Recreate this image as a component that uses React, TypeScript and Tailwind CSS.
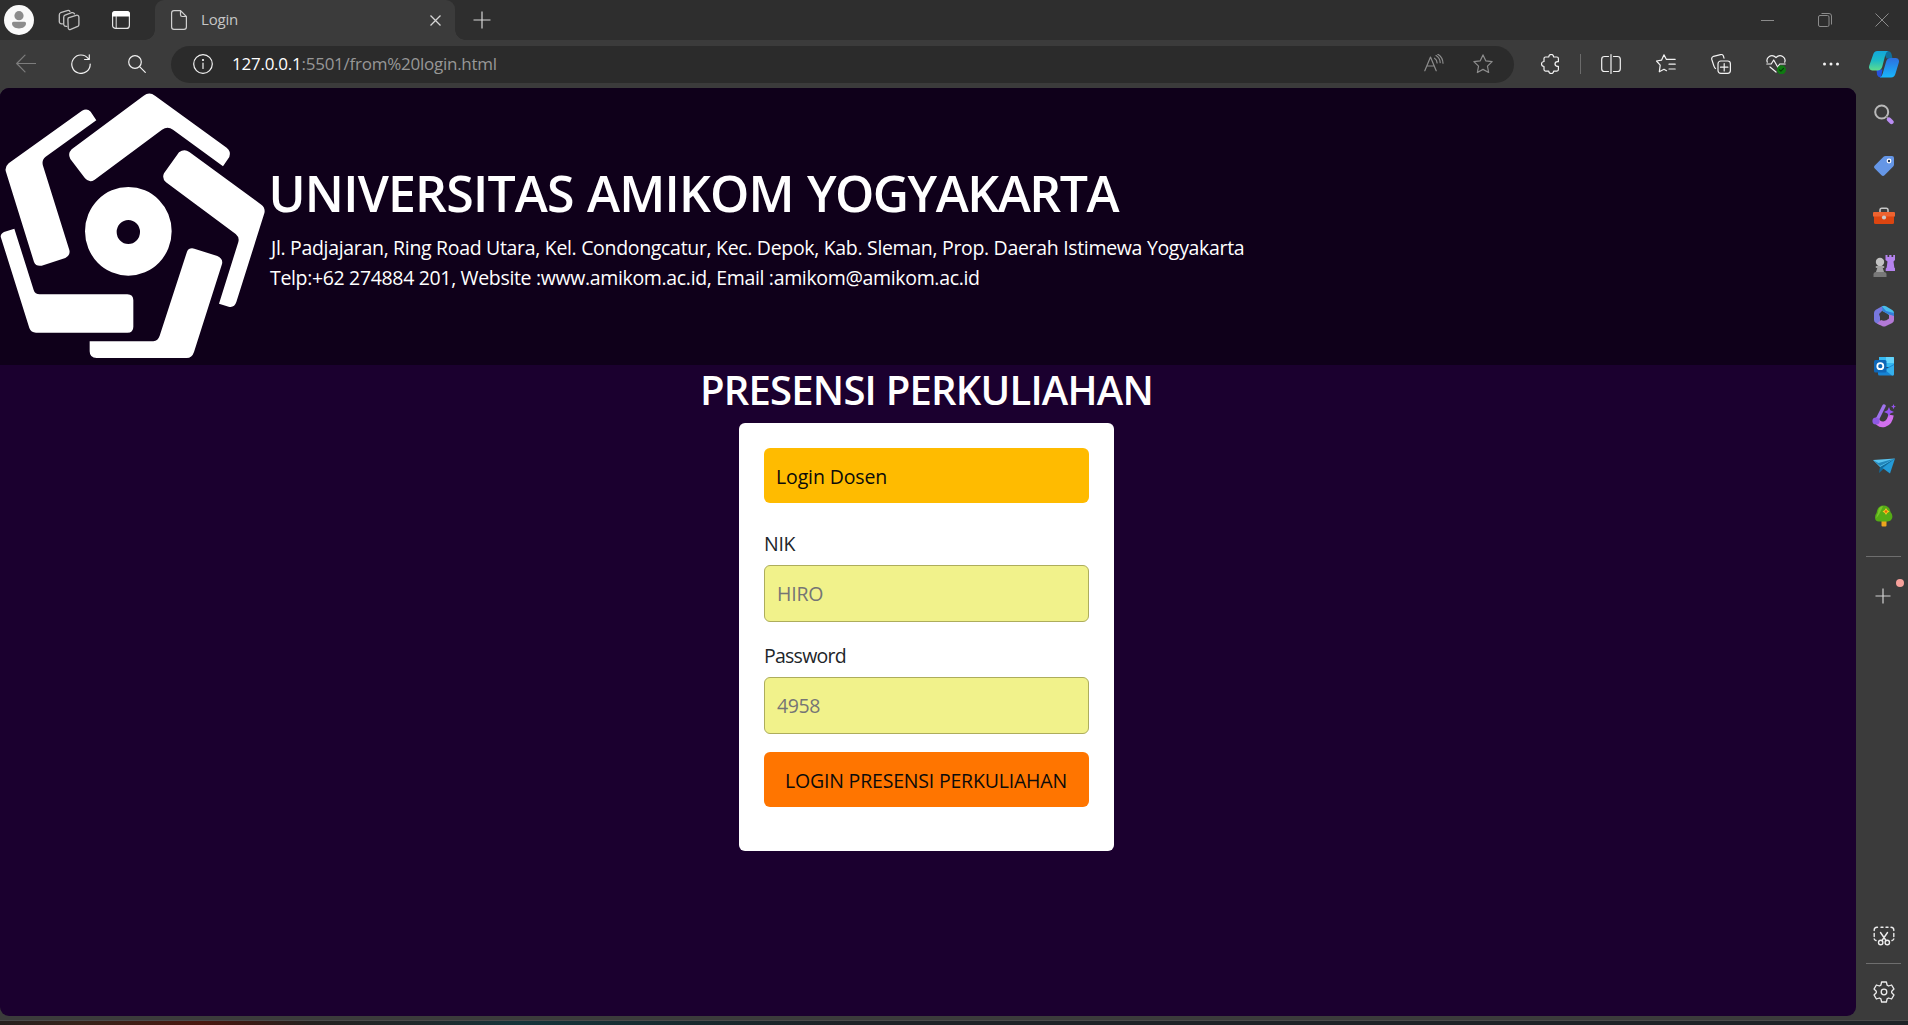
import type { ReactNode } from 'react';

function Icon({ size = 20, children, className = 'text-[#f2f2f2]' }: { size?: number; children: ReactNode; className?: string }) {
  return (
    <svg width={size} height={size} viewBox="0 0 20 20" fill="none" stroke="currentColor" strokeWidth="1.2" strokeLinecap="round" strokeLinejoin="round" className={className}>
      {children}
    </svg>
  );
}

const star = 'M10 0.9l2.75 5.9 6.4.85-4.7 4.45 1.2 6.4L10 15.4l-5.65 3.1 1.2-6.4L.85 7.65l6.4-.85z';

function TabStrip() {
  return (
    <div className="flex h-10 shrink-0 bg-[#2e2e2e]">
      <div className="flex w-[155px] items-center pl-1">
        <svg width="30" height="30" viewBox="0 0 30 30">
          <circle cx="15" cy="15" r="15" fill="#fafafa" />
          <circle cx="15" cy="10.7" r="4.6" fill="#8c8c8c" />
          <path d="M9.5 16.7h11q1.5 0 1.5 1.6c0 3.3-3 5.2-7 5.2s-7-1.9-7-5.2q0-1.6 1.5-1.6z" fill="#8c8c8c" />
        </svg>
        <Icon size={22} className="ml-6 text-[#c4c4c4]">
          <path d="M9 9.5 9.3 8l7.2-2.3q2.2-.5 2.5 1.7v6.8q0 1.1-1 1.6l-6.5 2.8q-1.7.6-2.2-1.2z" />
          <path d="M8 15.8q-2.3.4-2.8-1.6V7.6q0-1.5 1.2-2l6.1-2.2q1.7-.5 2.5 1" />
          <path d="M4 13.5q-2.2.4-2.8-1.6V5.4q0-1.5 1.2-2l6-2q1.6-.5 2.4.8" />
        </Icon>
        <svg width="18" height="18" viewBox="0 0 18 18" className="ml-8">
          <rect x=".6" y=".6" width="16.8" height="16.8" rx="3" fill="none" stroke="#e4e4e4" strokeWidth="1.2" />
          <path d="M0 5.5V3q0-3 3-3h12q3 0 3 3v2.500z" fill="#fff" />
          <path d="M4.200 5v12" stroke="#e4e4e4" />
        </svg>
      </div>
      <div className="relative flex w-[300px] items-center rounded-t-[9px] bg-[#3b3b3b] pl-4">
        <span className="absolute bottom-0 -left-2.5 h-2.5 w-2.5 bg-[radial-gradient(circle_at_0_0,#2e2e2e_9.5px,#3b3b3b_10px)]" />
        <span className="absolute -right-2.5 bottom-0 h-2.5 w-2.5 bg-[radial-gradient(circle_at_100%_0,#2e2e2e_9.5px,#3b3b3b_10px)]" />
        <svg width="16" height="20" viewBox="0 0 16 20" fill="none" stroke="#d0d0d0" strokeWidth="1.2">
          <path d="M9.500.6H3Q.6.6.6 3v14q0 2.400 2.400 2.400h10q2.400 0 2.400-2.400V6.500zM9.500.6v4.200q0 1.700 1.700 1.700h4.200" />
        </svg>
        <span className="mt-[-2px] ml-[14px] text-[15px] leading-5 tracking-[-0.2px] text-[#c6c6c6]">Login</span>
        <svg width="11" height="11" viewBox="0 0 11 11" stroke="#d6d6d6" strokeWidth="1.3" className="mr-[14px] ml-auto">
          <path d="M.5.5l10 10M10.500.5l-10 10" />
        </svg>
      </div>
      <svg width="18" height="18" viewBox="0 0 18 18" stroke="#d6d6d6" strokeWidth="1.2" className="mt-[11px] ml-[18px]">
        <path d="M9 .5v17M.5 9h17" />
      </svg>
      <div className="mr-[19px] ml-auto flex items-center gap-[43.5px] text-[#8b8b8b]">
        <svg width="13" height="13" viewBox="0 0 13 13" stroke="currentColor"><path d="M0 6.500h13" /></svg>
        <svg width="14" height="14" viewBox="0 0 14 14" fill="none" stroke="currentColor"><path d="M.5 4q0-1.500 1.500-1.500h7.500q1.500 0 1.500 1.500v8q0 1.500-1.500 1.500H2Q.5 13.500.5 12zM3.500.5H11q2.500 0 2.500 2.500v8.500" /></svg>
        <svg width="14" height="14" viewBox="0 0 14 14" stroke="currentColor"><path d="M.5.5l13 13M13.500.5l-13 13" /></svg>
      </div>
    </div>
  );
}

function Cell({ children }: { children: ReactNode }) {
  return <div className="flex w-[55px] shrink-0 justify-center">{children}</div>;
}

function Toolbar() {
  return (
    <div className="flex h-12 shrink-0 items-center bg-[#3b3b3b]">
      <div className="flex w-[171px] shrink-0 pr-[7px]">
        <div className="flex w-[52px] justify-center">
          <Icon className="text-[#7d7d7d]"><path d="M19.500 9.500H.8M9 1.200.7 9.500 9 17.800" /></Icon>
        </div>
        <div className="flex w-[57px] justify-center">
          <Icon><path d="M17.300 4.600A9.200 9.200 0 1 0 19.200 10M18.300.8v4.700h-4.700" /></Icon>
        </div>
        <div className="flex flex-1 justify-center">
          <Icon><circle cx="8" cy="8" r="6.300" /><path d="M12.600 12.600l5.700 5.700" /></Icon>
        </div>
      </div>
      <div className="flex h-[37px] w-[1343px] shrink-0 items-center rounded-full bg-[#2b2b2b] pl-[22px]">
        <Icon><circle cx="10" cy="10" r="9.300" /><path d="M10 9v5.500" /><circle cx="10" cy="6" r=".5" fill="currentColor" /></Icon>
        <span className="ml-[19px] text-[17px] leading-6 tracking-[-0.25px] whitespace-nowrap text-white">127.0.0.1</span>
        <span className="text-[17px] leading-6 tracking-[-0.25px] whitespace-nowrap text-[#979797]">:5501/from%20login.html</span>
        <div className="mr-[21px] ml-auto flex items-center gap-[29px] text-[#8d8d8d]">
          <Icon className=""><path d="M.8 16.800 6.500 3l5.700 13.800M2.700 12h7.600M10.500 4.200q2.500 1.600 2.600 4.800M12 1.600q4 2.400 4.200 7M13.800.2q5 3 5.200 9" /></Icon>
          <Icon className=""><path d={star} /></Icon>
        </div>
      </div>
      <div className="ml-[9px] flex shrink-0 items-center">
        <Cell>
          <Icon>
            <path d="M4.500 3h3.200q.3-2.600 2.500-2.600T12.700 3h3.200q1.500 0 1.500 1.500v3.200h-.7q-2.700.2-2.700 2.400t2.700 2.300h.7v3.200q0 1.500-1.500 1.500h-3.200q-.3 2.500-2.500 2.500t-2.500-2.500H4.500Q3 17.100 3 15.600v-3.100Q.5 12.200.5 10T3 7.500v-3Q3 3 4.500 3z" />
          </Icon>
        </Cell>
        <div className="flex w-[5px] justify-center"><div className="h-5 w-[1.5px] bg-[#6b6b6b]" /></div>
        <Cell>
          <Icon><path d="M7.500 2.500H3.500Q.7 2.500.7 5.300v9.400q0 2.800 2.800 2.800h4M12.500 2.500h4q2.800 0 2.800 2.800v9.400q0 2.800-2.800 2.800h-4M10 .6v18.800" /></Icon>
        </Cell>
        <Cell>
          <Icon><path d="M10.300 5.300 8 .8 5.500 6.200l-5 .8 3.700 4.200-.9 6.600L8 15.300l2.500 1.400M10.300 5.300h8.900M13 10.200h6.200M13 15h6.200" /></Icon>
        </Cell>
        <Cell>
          <Icon><rect x="7" y="7" width="12.400" height="12.400" rx="2.800" /><path d="M13.200 9.500v7.400M9.500 13.200h7.400M4.500 14.500Q3.500 14 3 12.200L.8 5.500Q.2 3.200 2.500 2.300L9.500.6q2.300-.5 3 1.700l.5 1.900" /></Icon>
        </Cell>
        <Cell>
          <Icon>
            <path d="M1.300 8.200C-.5 3.500 5.500-1 10 3.500c4.500-4.500 10.500 0 8.700 4.700M.8 10h4.400l2.500-4 4 7 2-3h5.500M4 13l6 5" />
            <circle cx="15.500" cy="15.700" r="4.500" fill="#0f7a12" stroke="none" />
            <path d="M13.500 15.800l1.400 1.400 2.600-2.800" stroke="#053f08" />
          </Icon>
        </Cell>
        <Cell>
          <Icon><g fill="currentColor" stroke="none"><circle cx="3.500" cy="10" r="1.500" /><circle cx="10" cy="10" r="1.500" /><circle cx="16.500" cy="10" r="1.500" /></g></Icon>
        </Cell>
        <div className="flex w-[50px] justify-center pl-px">
          <svg width="30" height="27" viewBox="0 0 30 27">
            <defs>
              <linearGradient id="cpA" x1="0" y1="0" x2="0" y2="1"><stop stopColor="#12a7dc" /><stop offset=".5" stopColor="#1ebbc4" /><stop offset="1" stopColor="#5fdc8c" /></linearGradient>
              <linearGradient id="cpB" x1="0" y1="0" x2="0" y2="1"><stop stopColor="#2d6fe0" /><stop offset="1" stopColor="#18b6fb" /></linearGradient>
            </defs>
            <path d="M14 0h4.500q3 0 4 3l1 4.500h-6z" fill="#106f9c" />
            <path d="M7.500 18.500h6l-1.500 8q-3 0-4-3z" fill="#2553dd" />
            <path d="M8.500 0H19q-2 1-2.700 4l-3 11.500q-1 4-5 4H3q-4-.5-2.700-5L4 4Q5 0 8.500 0z" fill="url(#cpA)" />
            <path d="M21.500 7H27q4 .5 2.700 5l-3.200 10.500q-1 4-4.500 4H11q2-1 2.700-4L17 11q1-4 4.500-4z" fill="url(#cpB)" />
          </svg>
        </div>
      </div>
    </div>
  );
}

function CampusLogo() {
  return (
    <svg width="270" height="277" viewBox="0 24 810 831" fill="#fff" className="shrink-0">
      <path d="M431 47Q448 34 465 47L680 203Q694 214 688 231L669 259L519 149Q503 137 486 149L284 299Q268 310 255 295L211 237Q202 222 215 208Z" />
      <path d="M537 217Q553 205 568 216L784 374Q797 384 793 400L709 666Q703 684 686 680L657 671L715 486Q719 472 707 462L498 307Q485 296 492 280Z" />
      <path d="M561 515Q567 502 583 506L652 528Q670 536 666 552L582 816Q576 834 560 834H290Q269 834 269 814V784H460Q474 782 479 767Z" />
      <path d="M2 470Q2 461 12 456L43 446L101 630Q105 643 119 643H382Q400 643 400 661V740Q400 758 382 758H108Q93 758 88 744Z" />
      <path d="M18 276Q13 262 26 250L246 92Q261 83 272 95L289 121L137 230Q124 240 129 257L208 510Q212 526 196 534L125 557Q108 560 102 546Z" />
      <path fillRule="evenodd" d="M385 321a130 133 0 1 1 0 266a130 133 0 1 1 0-266zM385 420a35 36 0 1 0 0 72a35 36 0 1 0 0-72z" />
    </svg>
  );
}

function Page() {
  return (
    <main className="flex h-[928px] w-[1856px] flex-col overflow-hidden rounded-[9px] bg-[#1b002f]">
      <header className="flex h-[277px] shrink-0 bg-[#0f001a] text-white">
        <CampusLogo />
        <div className="pt-[75px] whitespace-nowrap">
          <h1 className="ml-[-1.5px] text-[50px] leading-[60px] font-semibold [word-spacing:1px]">
            <span className="tracking-[-0.8px]">UNIVERSITAS </span>
            <span className="tracking-[-0.83px]">AMIKOM </span>
            <span className="tracking-[-1.5px]">YOGYAKARTA</span>
          </h1>
          <p className="mt-2.5 ml-px text-[19.5px] leading-[30px] tracking-[-0.32px]">Jl. Padjajaran, Ring Road Utara, Kel. Condongcatur, Kec. Depok, Kab. Sleman, Prop. Daerah Istimewa Yogyakarta</p>
          <p className="text-[19.5px] leading-[30px] tracking-[-0.34px]">Telp:+62 274884 201, Website :www.amikom.ac.id, Email :amikom@amikom.ac.id</p>
        </div>
      </header>
      <div className="flex flex-col items-center pr-[3px]">
        <h2 className="pt-px text-[40px] leading-[48px] font-semibold tracking-[-0.78px] text-white">PRESENSI PERKULIAHAN</h2>
        <form className="mt-[9px] h-[428px] w-[375px] rounded-[6px] bg-white p-[25px] text-[19.5px] leading-[30px] text-[#212529]">
          <div className="flex h-[55px] items-center rounded-[6px] bg-[#ffbb00] pt-[3px] pl-[12px] tracking-[-0.13px] text-[#0b0b0b]">Login Dosen</div>
          <label className="mt-[26px] mb-[6px] block tracking-[-0.3px]">NIK</label>
          <input placeholder="HIRO" className="block h-[57px] w-full rounded-[6px] border border-[#adad5c] bg-[#f1f28b] px-3 tracking-[-0.18px] placeholder:text-[#757575]" />
          <label className="mt-[19px] mb-[6px] block tracking-[-0.75px]">Password</label>
          <input placeholder="4958" className="block h-[57px] w-full rounded-[6px] border border-[#adad5c] bg-[#f1f28b] px-3 tracking-[-0.4px] placeholder:text-[#757575]" />
          <button type="button" className="mt-[18px] flex h-[55px] w-full items-center justify-center rounded-[6px] bg-[#ff7500] pt-[3px] pr-px tracking-[-0.19px] whitespace-nowrap text-[#0b0b0b]">LOGIN PRESENSI PERKULIAHAN</button>
        </form>
      </div>
    </main>
  );
}

function SideItem({ children }: { children: ReactNode }) {
  return <div className="flex h-[50px] items-center justify-center pl-[3px]">{children}</div>;
}

function Sidebar() {
  return (
    <aside className="flex w-[52px] flex-col pt-[3px]">
      <SideItem>
        <svg width="22" height="22" viewBox="0 0 22 22" fill="none" strokeLinecap="round" className="-mt-1">
          <circle cx="8.700" cy="9" r="6.500" stroke="#b9b9b9" strokeWidth="2" />
          <path d="M13.500 13.800l2 2" stroke="#8d8d8d" strokeWidth="1.500" />
          <path d="M16 16.500l2.500 2.500" stroke="#b98cf2" strokeWidth="4.400" />
        </svg>
      </SideItem>
      <SideItem>
        <svg width="20" height="20" viewBox="0 0 20 20">
          <path d="M9.500.8Q10.300 0 11.500 0H18q2 0 2 2v6.500q0 1.200-.8 2L10.500 19.200q-1.500 1.500-3 0L.8 12.500q-1.500-1.500 0-3z" fill="#6596e6" />
          <circle cx="15" cy="5" r="2.400" fill="#fff" /><circle cx="15" cy="5" r="1.200" fill="#1d2f52" />
        </svg>
      </SideItem>
      <SideItem>
        <svg width="22" height="18" viewBox="0 0 22 18">
          <path d="M7 5V3q0-1.800 1.800-1.800h4.400Q15 1.200 15 3v2" fill="none" stroke="#c7c7c7" strokeWidth="1.500" />
          <path d="M1 8h20v7.500q0 1.500-1.500 1.500h-17Q1 17 1 15.500z" fill="#dc4510" />
          <path d="M1 5h20q1 0 1 1v3.500H0V6q0-1 1-1z" fill="#ed6330" />
          <circle cx="11" cy="10.500" r="2.100" fill="#c9c9c9" />
        </svg>
      </SideItem>
      <SideItem>
        <svg width="22" height="22" viewBox="0 0 22 22">
          <path d="M12.500 0h2v2h1.700V0h2.300v2h1.700V0h1.800v5l-1.500 1.500.8 6 1 1.200V16h-9.600v-2.300l1-1.200.8-6-2-1.500z" fill="#b583ee" />
          <circle cx="7" cy="7" r="4.200" fill="#c2c2c2" />
          <path d="M2.800 11h8.400v2H9.700l1.500 4.500H2.800L4.300 13H2.800z" fill="#a3a3a3" />
          <path d="M.5 19.500q0-2.500 2.500-2.500h8q2.500 0 2.500 2.500V22H.5z" fill="#787878" />
        </svg>
      </SideItem>
      <SideItem>
        <svg width="20" height="22" viewBox="0 0 20 22">
          <path d="M8.500 1 1.800 4.800Q0 6 0 8v7q0 2 2 3l4 2V12l-1-3 5-5z" fill="#7878de" />
          <path d="M8 1.300Q10 0 12 1.300L18.200 5Q20 6 20 8v6l-7-5.500L8.500 6z" fill="#48bdea" />
          <path d="M8 1.300 8.500 6 13 8.500 20 12V8L12 6z" fill="#357fd8" />
          <path d="M20 11v4q0 2-1.800 3L12 21q-2 1-4 0l-5-2.500 4-3.500q4 2 8-1.500V9.500z" fill="#b379d6" />
        </svg>
      </SideItem>
      <SideItem>
        <svg width="20" height="20" viewBox="0 0 20 20">
          <path d="M5 1h14q1 0 1 1v9H5z" fill="#35b8f1" />
          <path d="M12 1h7q1 0 1 1v5h-8z" fill="#62d3fa" />
          <path d="M4 9l9 3 7-4v10q0 1.500-1.500 1.500h-13Q4 19.500 4 18z" fill="#1683d4" />
          <path d="M20 9l-9 5 7 5.500h.5q1.500 0 1.500-1.500z" fill="#35b0ec" />
          <rect y="4" width="12.500" height="12.500" rx="1.500" fill="#0f67b7" />
          <circle cx="6.300" cy="10.200" r="3" fill="none" stroke="#fff" strokeWidth="1.800" />
        </svg>
      </SideItem>
      <SideItem>
        <svg width="24" height="24" viewBox="0 0 24 24">
          <path d="M3.500 14Q6.500 22 13 20q5-2 6-9" fill="none" stroke="#d170ed" strokeWidth="5.500" />
          <path d="M12 2 5 16" stroke="#9f73ec" strokeWidth="3.500" strokeLinecap="round" />
          <circle cx="4" cy="17" r="3.600" fill="#8f59e4" />
          <path d="M17 3l1.300 3.200L22 8l-3.700 1.500L17 13l-1.500-3.500L12 8l3.500-1.800zM21.500 0l.8 1.900 1.700.6-1.700.8-.8 1.900-.8-1.900-1.700-.8 1.700-.6z" fill="#9454ee" />
        </svg>
      </SideItem>
      <SideItem>
        <svg width="22" height="16" viewBox="0 0 22 16">
          <path d="M0 2 22 .5 8 10z" fill="#59c4ef" />
          <path d="M7 9 22 .5 6 15z" fill="#116c9f" />
          <path d="M22 .5 9.500 10l7.500 5.500z" fill="#249bd8" />
          <path d="M0 2l7 6L22 .5 5.500 5z" fill="#2187bd" />
        </svg>
      </SideItem>
      <SideItem>
        <svg width="20" height="22" viewBox="0 0 20 22">
          <rect x="7.500" y="15" width="5" height="6.500" rx="1" fill="#eda51e" />
          <path d="M9.500.5q6 0 7 6.500 2.500 2.500 1.700 6-1.200 3.500-5.200 3.500H5q-4 0-4-4Q1 9.500 2.500 8 3.500.5 9.500.5z" fill="#55ab16" />
          <path d="M9 1Q4 2 4 8q-2 3-1.500 5Q6 9 9 1z" fill="#77c62a" />
          <path d="M12 3l1.200 2L15.500 6.500 13.200 8 12 10l-1.200-2L8.500 6.500 10.800 5z" fill="#f9c821" /><circle cx="12" cy="6.500" r="1.200" fill="#e3660a" />
        </svg>
      </SideItem>
      <div className="mt-[15px] ml-2.5 h-px w-[35px] bg-[#6e6e6e]" />
      <div className="relative mt-[31px] ml-[19px] h-4 w-4">
        <svg width="16" height="16" viewBox="0 0 16 16" stroke="#d2d2d2" strokeWidth="1.200"><path d="M8 .5v15M.5 8h15" /></svg>
        <span className="absolute -top-[9px] left-[21px] h-2 w-2 rounded-full bg-[#f7a19b]" />
      </div>
      <div className="mt-auto mb-[17px] flex flex-col items-center pl-[3px]">
        <svg width="22" height="20" viewBox="0 0 22 20" fill="none" stroke="#ededed" strokeWidth="1.400" strokeLinecap="round">
          <path d="M1.200 4.500V4Q1.200 1.200 4 1.200h.5M8 1.200h2M13 1.200h2M18 1.200q2.800 0 2.800 2.800v.5M1.200 7.500v3M20.800 7.500v3M1.200 13q.2 1.200 1.800 1.500M20.800 13q-.2 1.200-1.800 1.500M7.500 6.500l5.500 8M14.500 6.500 9 14.500" />
          <circle cx="7.700" cy="16.500" r="2.200" /><circle cx="14.300" cy="16.500" r="2.200" />
        </svg>
        <div className="mt-[17px] h-px w-[35px] bg-[#6e6e6e]" />
        <svg width="22" height="22" viewBox="0 0 22 22" fill="none" stroke="#ededed" strokeWidth="1.300" strokeLinejoin="round" className="mt-[17px]">
          <path d="M8.600 1h4.800l.7 3.100 1.500.9 3-1 2.400 4.100L18.700 10.200v1.600l2.300 2.100-2.400 4.100-3-1-1.500.9-.7 3.100H8.600l-.7-3.100-1.500-.9-3 1L1 13.900l2.300-2.100v-1.600L1 8.100 3.400 4l3 1 1.500-.9z" />
          <circle cx="11" cy="11" r="2.800" />
        </svg>
      </div>
    </aside>
  );
}

export default function App() {
  return (
    <div className="flex h-[1025px] w-[1908px] flex-col overflow-hidden bg-[#3b3b3b] font-['Open_Sans','Noto_Sans',sans-serif]">
      <TabStrip />
      <Toolbar />
      <div className="flex h-[932px] shrink-0">
        <Page />
        <Sidebar />
      </div>
      <div className="h-[5px] border-t border-[#4a4a4a] bg-[linear-gradient(90deg,#26201e_0,#36231a_80px,#4a170f_200px,#3a1a14_250px,#24211f_310px,#20292b_420px,#15343a_520px,#18292d_700px,#1e2226_850px,#1e2226_100%)]" />
    </div>
  );
}
